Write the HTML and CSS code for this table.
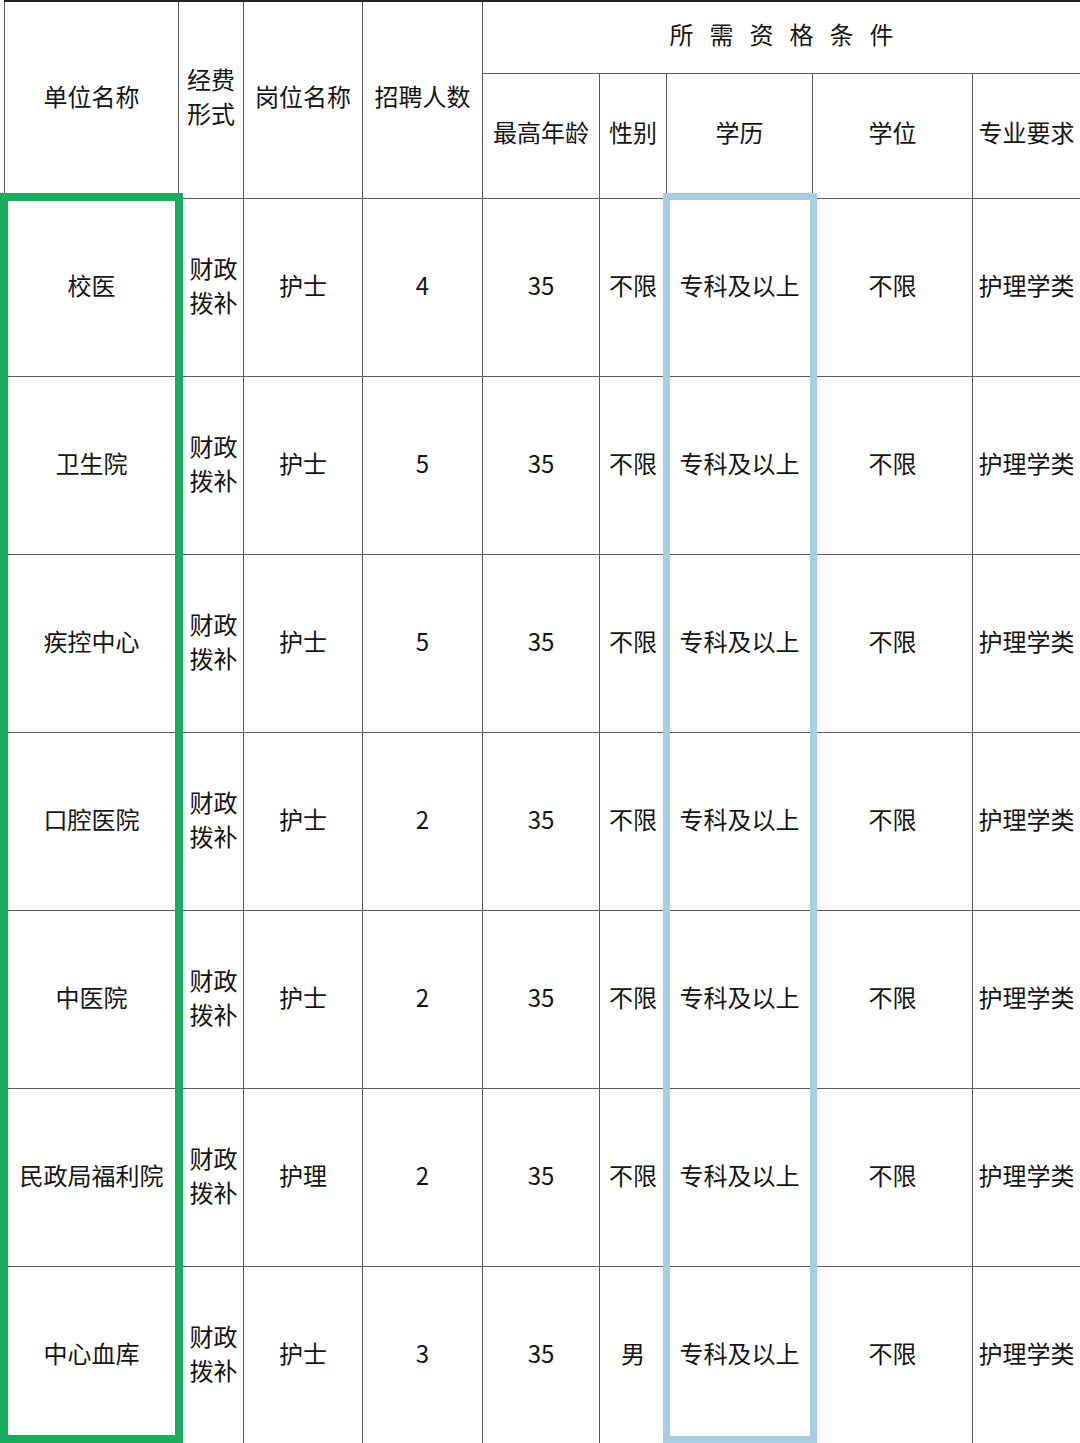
FILE: index.html
```html
<!DOCTYPE html>
<html lang="zh-CN">
<head>
<meta charset="utf-8">
<link rel="stylesheet" href="styles.css">
</head>
<body>
<div class="sheet">
<table class="grid">
<colgroup>
<col class="c1"><col class="c2"><col class="c3"><col class="c4"><col class="c5"><col class="c6"><col class="c7"><col class="c8"><col class="c9">
</colgroup>
<thead>
<tr class="h1">
<th rowspan="2">单位名称</th>
<th rowspan="2" class="two">经费<br>形式</th>
<th rowspan="2">岗位名称</th>
<th rowspan="2">招聘人数</th>
<th colspan="5" class="spaced">所需资格条件</th>
</tr>
<tr class="h2">
<th>最高年龄</th><th>性别</th><th>学历</th><th>学位</th><th>专业要求</th>
</tr>
</thead>
<tbody>
<tr><td>校医</td><td class="two">财政<br>拨补</td><td>护士</td><td>4</td><td>35</td><td>不限</td><td>专科及以上</td><td>不限</td><td>护理学类</td></tr>
<tr><td>卫生院</td><td class="two">财政<br>拨补</td><td>护士</td><td>5</td><td>35</td><td>不限</td><td>专科及以上</td><td>不限</td><td>护理学类</td></tr>
<tr><td>疾控中心</td><td class="two">财政<br>拨补</td><td>护士</td><td>5</td><td>35</td><td>不限</td><td>专科及以上</td><td>不限</td><td>护理学类</td></tr>
<tr><td>口腔医院</td><td class="two">财政<br>拨补</td><td>护士</td><td>2</td><td>35</td><td>不限</td><td>专科及以上</td><td>不限</td><td>护理学类</td></tr>
<tr><td>中医院</td><td class="two">财政<br>拨补</td><td>护士</td><td>2</td><td>35</td><td>不限</td><td>专科及以上</td><td>不限</td><td>护理学类</td></tr>
<tr><td>民政局福利院</td><td class="two">财政<br>拨补</td><td>护理</td><td>2</td><td>35</td><td>不限</td><td>专科及以上</td><td>不限</td><td>护理学类</td></tr>
<tr><td>中心血库</td><td class="two">财政<br>拨补</td><td>护士</td><td>3</td><td>35</td><td>男</td><td>专科及以上</td><td>不限</td><td>护理学类</td></tr>
</tbody>
</table>
<div class="mark mark-green"></div>
<div class="mark mark-blue"></div>
</div>
</body>
</html>
```
FILE: styles.css
```css
html, body {
  margin: 0;
  padding: 0;
  background: #ffffff;
}
body {
  font-family: "Noto Sans CJK SC", "Noto Sans", sans-serif;
  color: #141414;
  width: 1080px;
  height: 1443px;
  overflow: hidden;
}
.sheet {
  position: relative;
  width: 1080px;
  height: 1443px;
}
.grid {
  margin-left: 4px;
  width: 1076px;
  border-collapse: collapse;
  table-layout: fixed;
  border-top: 2px solid #222;
  border-bottom: 2px solid #222;
}
.c1 { width: 174px; }
.c2 { width: 65px; }
.c3 { width: 119px; }
.c4 { width: 120px; }
.c5 { width: 117px; }
.c6 { width: 67px; }
.c7 { width: 146px; }
.c8 { width: 160px; }
.c9 { width: 108px; }
.grid th, .grid td {
  border: 1px solid #5a5a5a;
  padding: 0 0 4px 0;
  text-align: center;
  vertical-align: middle;
  font-size: 24px;
  font-weight: 400;
  line-height: 34px;
  white-space: nowrap;
}
.grid th {
  padding-bottom: 8px;
}
.grid .h1 .spaced {
  padding-bottom: 6px;
}
.grid thead tr:first-child th {
  border-top: 2px solid #222;
}
.grid tbody tr:last-child td {
  border-bottom: 2px solid #222;
}
.h1 { height: 72px; }
.h2 { height: 125px; }
.grid tbody tr { height: 178px; }
.spaced {
  letter-spacing: 16px;
  text-indent: 16px;
}
.grid td.two {
  padding-left: 5px;
}
.mark {
  position: absolute;
  box-sizing: border-box;
  top: 193px;
  height: 1250px;
}
.mark-green {
  left: 0;
  width: 183px;
  border: 8px solid #17ad5c;
}
.mark-blue {
  left: 663px;
  width: 154px;
  border: 7px solid #a9cee2;
}
```
